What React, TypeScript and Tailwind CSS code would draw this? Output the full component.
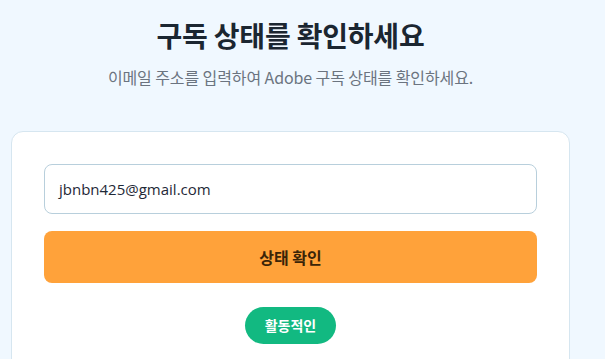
import React from "react";

export default function App() {
  return (
    <div className="min-h-[359px] w-[605px] bg-[#f0f8ff] overflow-hidden font-['Noto_Sans_CJK_KR',sans-serif]">
      <div className="w-[581px] px-[11px] pt-[13px] flex flex-col items-center">
        <h1 className="text-[28px] leading-[44px] font-bold text-[#1b2631] tracking-[-0.2px]">
          구독 상태를 확인하세요
        </h1>
        <p className="mt-[8px] text-[16px] leading-[24px] text-[#6b7480] tracking-[-0.1px]">
          이메일 주소를 입력하여 Adobe 구독 상태를 확인하세요.
        </p>
        <div className="mt-[42px] w-full bg-white border border-[#d6e6f0] rounded-[12px] px-[32px] pt-[32px] pb-[40px] flex flex-col items-center">
          <div className="w-full h-[50px] border border-[#b8cfdc] rounded-[8px] flex items-center px-[14px] text-[15px] text-[#1f2937] font-['Open_Sans','Noto_Sans',sans-serif]">
            jbnbn425@gmail.com
          </div>
          <div className="mt-[17px] w-full h-[52px] bg-[#ffa23a] rounded-[8px] flex items-center justify-center text-[16px] font-bold text-[#3a2408]">
            상태 확인
          </div>
          <div className="mt-[24px] h-[37px] px-[20px] bg-[#12b981] rounded-full flex items-center justify-center text-[14px] font-bold text-white">
            활동적인
          </div>
        </div>
      </div>
    </div>
  );
}
